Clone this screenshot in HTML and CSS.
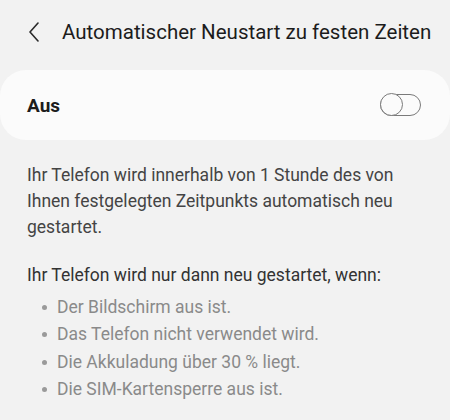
FILE: index.html
```html
<!DOCTYPE html>
<html lang="de">
<head>
    <meta charset="UTF-8">
    <meta name="viewport" content="width=device-width, initial-scale=1.0">
    <title>Automatischer Neustart zu festen Zeiten</title>
    <link rel="stylesheet" href="styles.css">
</head>
<body>
    <div class="screen">
        <header class="top-bar">
            <button class="back-btn" aria-label="Zurück">
                <svg width="12" height="20" viewBox="0 0 12 20">
                    <path d="M10 1 L2 10 L10 19" fill="none" stroke="#2a2a2a" stroke-width="1.6" stroke-linecap="round" stroke-linejoin="round"/>
                </svg>
            </button>
            <h1>Automatischer Neustart zu festen Zeiten</h1>
        </header>

        <div class="switch-card">
            <span class="switch-label">Aus</span>
            <span class="toggle">
                <span class="toggle-knob"></span>
            </span>
        </div>

        <p class="info">Ihr Telefon wird innerhalb von 1 Stunde des von Ihnen festgelegten Zeitpunkts automatisch neu gestartet.</p>

        <p class="conditions-title">Ihr Telefon wird nur dann neu gestartet, wenn:</p>
        <ul class="conditions">
            <li>Der Bildschirm aus ist.</li>
            <li>Das Telefon nicht verwendet wird.</li>
            <li>Die Akkuladung über 30 % liegt.</li>
            <li>Die SIM-Kartensperre aus ist.</li>
        </ul>
    </div>
</body>
</html>
```

FILE: styles.css
```css
* {
    margin: 0;
    padding: 0;
    box-sizing: border-box;
}

body {
    background: #f2f2f2;
    font-family: 'Roboto', 'Noto Sans', sans-serif;
    color: #1c1c1c;
}

.screen {
    width: 450px;
    height: 420px;
    overflow: hidden;
}

.top-bar {
    display: flex;
    align-items: center;
    height: 64px;
    padding-left: 28px;
    gap: 22px;
}

.back-btn {
    background: none;
    border: none;
    display: flex;
    align-items: center;
}

h1 {
    font-size: 20.5px;
    font-weight: 400;
    color: #1c1c1c;
    letter-spacing: 0;
}

.switch-card {
    margin: 6px 0 0 0;
    height: 70px;
    background: #fbfbfb;
    border-radius: 26px;
    display: flex;
    align-items: center;
    justify-content: space-between;
    padding: 0 29px 0 27px;
}

.switch-label {
    font-size: 19px;
    font-weight: 700;
    color: #1c1c1c;
}

.toggle {
    position: relative;
    width: 41px;
    height: 22px;
    border: 1.5px solid #7a7a7a;
    border-radius: 11px;
}

.toggle-knob {
    position: absolute;
    left: -1.5px;
    top: -2px;
    width: 23px;
    height: 23px;
    border: 1.5px solid #7a7a7a;
    border-radius: 50%;
    background: #fbfbfb;
}

.info {
    margin-top: 22px;
    padding: 0 27px;
    font-size: 17.5px;
    line-height: 26px;
    color: #444;
}

.conditions-title {
    margin-top: 22px;
    padding: 0 27px;
    font-size: 17.5px;
    line-height: 26px;
    color: #333;
}

.conditions {
    list-style: none;
    padding: 6px 0 0 42px;
}

.conditions li {
    display: flex;
    align-items: center;
    gap: 10px;
    font-size: 17.5px;
    line-height: 27.3px;
    color: #8a8a8a;
}

.conditions li::before {
    content: '';
    width: 5px;
    height: 5px;
    border-radius: 50%;
    background: #9a9a9a;
}
```
